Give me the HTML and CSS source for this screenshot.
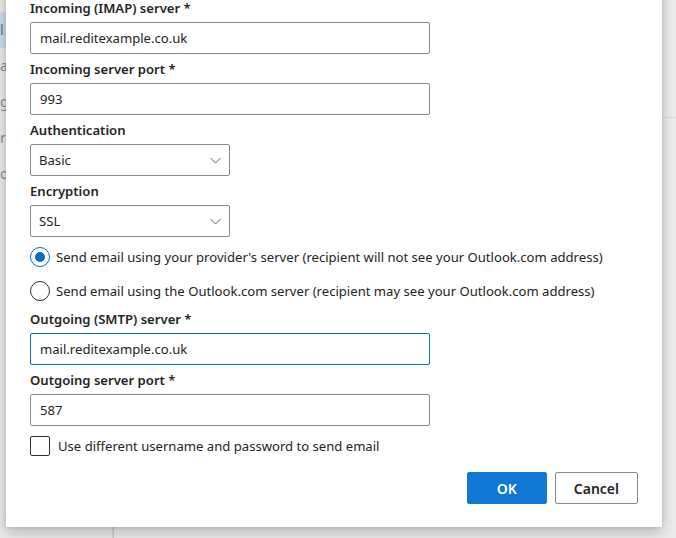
FILE: index.html
```html
<!DOCTYPE html>
<html lang="en">
<head>
<meta charset="utf-8">
<title>Sync email</title>
<link rel="stylesheet" href="styles.css">
</head>
<body>
<div class="backdrop">
  <nav class="side">
    <div class="side-item active">l</div>
    <div class="side-item">a</div>
    <div class="side-item">g</div>
    <div class="side-item">r</div>
    <div class="side-item">or</div>
  </nav>
  <div class="main">
    <div class="main-top"></div>
    <div class="main-rest"></div>
  </div>
</div>
<div class="bottom-strip"><span class="bottom-line"></span></div>

<div class="dialog">
  <form class="form">
    <label class="label first" for="imap">Incoming (IMAP) server *</label>
    <input class="field" id="imap" type="text" value="mail.reditexample.co.uk">

    <label class="label" for="inport">Incoming server port *</label>
    <input class="field" id="inport" type="text" value="993">

    <label class="label">Authentication</label>
    <div class="select"><span>Basic</span><svg class="chev" width="11" height="7" viewBox="0 0 11 7"><path d="M0.5 1 L5.5 6 L10.5 1" fill="none" stroke="#605e5c" stroke-width="1"/></svg></div>

    <label class="label">Encryption</label>
    <div class="select"><span>SSL</span><svg class="chev" width="11" height="7" viewBox="0 0 11 7"><path d="M0.5 1 L5.5 6 L10.5 1" fill="none" stroke="#605e5c" stroke-width="1"/></svg></div>

    <div class="radios">
      <div class="radio-row"><span class="radio checked"></span><span>Send email using your provider's server (recipient will not see your Outlook.com address)</span></div>
      <div class="radio-row"><span class="radio"></span><span>Send email using the Outlook.com server (recipient may see your Outlook.com address)</span></div>
    </div>

    <label class="label tight" for="smtp">Outgoing (SMTP) server *</label>
    <input class="field focused" id="smtp" type="text" value="mail.reditexample.co.uk">

    <label class="label" for="outport">Outgoing server port *</label>
    <input class="field" id="outport" type="text" value="587">

    <div class="check-row"><span class="check"></span><span>Use different username and password to send email</span></div>

    <div class="actions">
      <button type="button" class="btn primary">OK</button>
      <button type="button" class="btn">Cancel</button>
    </div>
  </form>
</div>
</body>
</html>
```

FILE: styles.css
```css
* { box-sizing: border-box; }
html, body { margin: 0; padding: 0; }
body {
  width: 676px;
  height: 538px;
  overflow: hidden;
  background: #e6e6e6;
  font-family: "Noto Sans", "Open Sans", sans-serif;
  font-size: 13.1px;
  color: #242424;
  position: relative;
}

.backdrop {
  display: flex;
  height: 538px;
}
.side {
  width: 113px;
  background: #ebebeb;
  border-right: 1px solid #d6d6d6;
  padding-top: 12px;
  color: #8a8a8a;
  font-size: 14px;
}
.side-item {
  height: 36px;
  line-height: 36px;
  padding-left: 0;
  white-space: nowrap;
}
.side-item.active {
  background: #cddcec;
  color: #4a78aa;
}
.main {
  flex: 1;
  display: flex;
  flex-direction: column;
  background: #ececec;
}
.main-top {
  height: 118px;
  border-bottom: 1px solid #dcdcdc;
}
.main-rest { flex: 1; }

.bottom-strip {
  position: absolute;
  left: 0; right: 0; bottom: 0;
  height: 11px;
}
.bottom-line {
  position: absolute;
  left: 113px; top: 0; bottom: 0;
  width: 1px;
  background: #cfcfcf;
}

.dialog {
  position: absolute;
  left: 6px;
  top: -60px;
  width: 656px;
  height: 587px;
  background: #ffffff;
  box-shadow: 0 6px 14px rgba(0,0,0,0.22), 0 0 4px rgba(0,0,0,0.12);
  padding: 58px 24px 0 24px;
}

.form {
  display: flex;
  flex-direction: column;
  align-items: flex-start;
}
.label {
  display: block;
  font-weight: 600;
  line-height: 20px;
  padding: 5px 0 4px 0;
  color: #242424;
}
.label.first { padding-top: 0; }
.label.tight { padding-top: 1px; }

.field {
  width: 400px;
  height: 32px;
  border: 1px solid #8a8886;
  border-radius: 2px;
  padding: 0 9px;
  font: inherit;
  color: #242424;
  background: #fff;
  outline: none;
}
.field.focused { border-color: #0f6cbd; }

.select {
  width: 200px;
  height: 32px;
  border: 1px solid #8a8886;
  border-radius: 2px;
  padding: 0 8px 0 8px;
  display: flex;
  align-items: center;
  justify-content: space-between;
}
.chev { display: block; }

.radios {
  display: flex;
  flex-direction: column;
  padding-top: 3px;
}
.radio-row {
  display: flex;
  align-items: center;
  gap: 6px;
  height: 34px;
}
.radio {
  width: 20px;
  height: 20px;
  border-radius: 50%;
  border: 1px solid #323130;
  display: flex;
  align-items: center;
  justify-content: center;
  flex: none;
}
.radio.checked { border-color: #0f6cbd; }
.radio.checked::after {
  content: "";
  width: 10px;
  height: 10px;
  border-radius: 50%;
  background: #0f6cbd;
}

.check-row {
  display: flex;
  align-items: center;
  gap: 8px;
  margin-top: 10px;
  height: 20px;
}
.check {
  width: 20px;
  height: 20px;
  border: 1px solid #323130;
  border-radius: 2px;
  flex: none;
}

.actions {
  align-self: flex-end;
  display: flex;
  gap: 8px;
  margin-top: 16px;
}
.btn {
  height: 32px;
  min-width: 80px;
  padding: 0 18px;
  border: 1px solid #8a8886;
  border-radius: 2px;
  background: #fff;
  font: inherit;
  font-size: 14px;
  font-weight: 600;
  color: #242424;
}
.btn.primary {
  background: #0f78d4;
  border-color: #0f78d4;
  color: #fff;
}
```
